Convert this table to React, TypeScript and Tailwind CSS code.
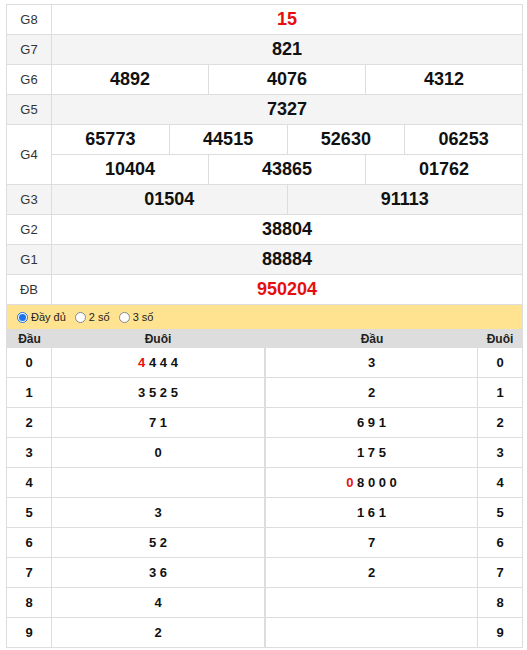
import React from "react";

const font = { fontFamily: '"Liberation Sans", Arial, sans-serif' };

function Row({ label, bg, children, h = "h-[30px]" }: { label: string; bg: string; children: React.ReactNode; h?: string }) {
  return (
    <div className={`flex ${h} border-b border-[#dddddd] ${bg}`}>
      <div className="w-[45px] shrink-0 border-r border-[#dddddd] flex items-center justify-center text-[13px] text-[#333]">{label}</div>
      <div className="flex-1 flex flex-col">{children}</div>
    </div>
  );
}

function Cells({ nums, red = false, last = true }: { nums: string[]; red?: boolean; last?: boolean }) {
  return (
    <div className={`flex flex-1 ${last ? "" : "border-b border-[#dddddd]"}`}>
      {nums.map((n, i) => (
        <div
          key={i}
          className={`flex-1 flex items-center justify-center text-[18px] font-bold ${red ? "text-[#e60f0f]" : "text-[#111]"} ${i < nums.length - 1 ? "border-r border-[#dddddd]" : ""}`}
        >
          {n}
        </div>
      ))}
    </div>
  );
}

const left: [string, React.ReactNode][] = [
  ["0", <span><span className="text-[#e60f0f]">4</span>{" 4 4 4"}</span>],
  ["1", "3 5 2 5"],
  ["2", "7 1"],
  ["3", "0"],
  ["4", ""],
  ["5", "3"],
  ["6", "5 2"],
  ["7", "3 6"],
  ["8", "4"],
  ["9", "2"],
];
const right: [React.ReactNode, string][] = [
  ["3", "0"],
  ["2", "1"],
  ["6 9 1", "2"],
  ["1 7 5", "3"],
  [<span><span className="text-[#e60f0f]">0</span>{" 8 0 0 0"}</span>, "4"],
  ["1 6 1", "5"],
  ["7", "6"],
  ["2", "7"],
  ["", "8"],
  ["", "9"],
];

function Radio({ on, label }: { on?: boolean; label: string }) {
  return (
    <div className="flex items-center gap-[3px] mr-[9px]">
      <span className={`w-[11px] h-[11px] rounded-full border ${on ? "border-[#1a73e8] bg-white" : "border-[#888] bg-white"} flex items-center justify-center`}>
        {on && <span className="w-[7px] h-[7px] rounded-full bg-[#1a73e8]" />}
      </span>
      <span className="text-[11px] text-[#222]">{label}</span>
    </div>
  );
}

export default function App() {
  return (
    <div className="w-[527px] h-[650px] bg-white overflow-hidden" style={font}>
      <div className="ml-[6px] mt-[4px] w-[517px] border-t border-l border-r border-[#dddddd]">
        <Row label="G8" bg="bg-white"><Cells nums={["15"]} red /></Row>
        <Row label="G7" bg="bg-[#f4f4f4]"><Cells nums={["821"]} /></Row>
        <Row label="G6" bg="bg-white"><Cells nums={["4892", "4076", "4312"]} /></Row>
        <Row label="G5" bg="bg-[#f4f4f4]"><Cells nums={["7327"]} /></Row>
        <Row label="G4" bg="bg-white" h="h-[60px]">
          <Cells nums={["65773", "44515", "52630", "06253"]} last={false} />
          <Cells nums={["10404", "43865", "01762"]} />
        </Row>
        <Row label="G3" bg="bg-[#f4f4f4]"><Cells nums={["01504", "91113"]} /></Row>
        <Row label="G2" bg="bg-white"><Cells nums={["38804"]} /></Row>
        <Row label="G1" bg="bg-[#f4f4f4]"><Cells nums={["88884"]} /></Row>
        <Row label="ĐB" bg="bg-white"><Cells nums={["950204"]} red /></Row>

        <div className="h-[24px] bg-[#ffe391] flex items-center pl-[10px]">
          <Radio on label="Đầy đủ" />
          <Radio label="2 số" />
          <Radio label="3 số" />
        </div>

        <div className="flex">
          <div className="w-[259px] border-r-2 border-[#dddddd]">
            <div className="flex h-[19px] bg-[#dddddd] text-[12px] font-bold text-[#222]">
              <div className="w-[45px] flex items-center justify-center">Đầu</div>
              <div className="flex-1 flex items-center justify-center">Đuôi</div>
            </div>
            {left.map(([d, t], i) => (
              <div key={i} className="flex h-[30px] border-b border-[#dddddd] text-[13px] font-bold text-[#111]">
                <div className="w-[45px] border-r border-[#dddddd] flex items-center justify-center">{d}</div>
                <div className="flex-1 flex items-center justify-center">{t}</div>
              </div>
            ))}
          </div>
          <div className="flex-1">
            <div className="flex h-[19px] bg-[#dddddd] text-[12px] font-bold text-[#222]">
              <div className="flex-1 flex items-center justify-center">Đầu</div>
              <div className="w-[44px] flex items-center justify-center">Đuôi</div>
            </div>
            {right.map(([t, d], i) => (
              <div key={i} className="flex h-[30px] border-b border-[#dddddd] text-[13px] font-bold text-[#111]">
                <div className="flex-1 border-r border-[#dddddd] flex items-center justify-center">{t}</div>
                <div className="w-[44px] flex items-center justify-center">{d}</div>
              </div>
            ))}
          </div>
        </div>
      </div>
    </div>
  );
}
